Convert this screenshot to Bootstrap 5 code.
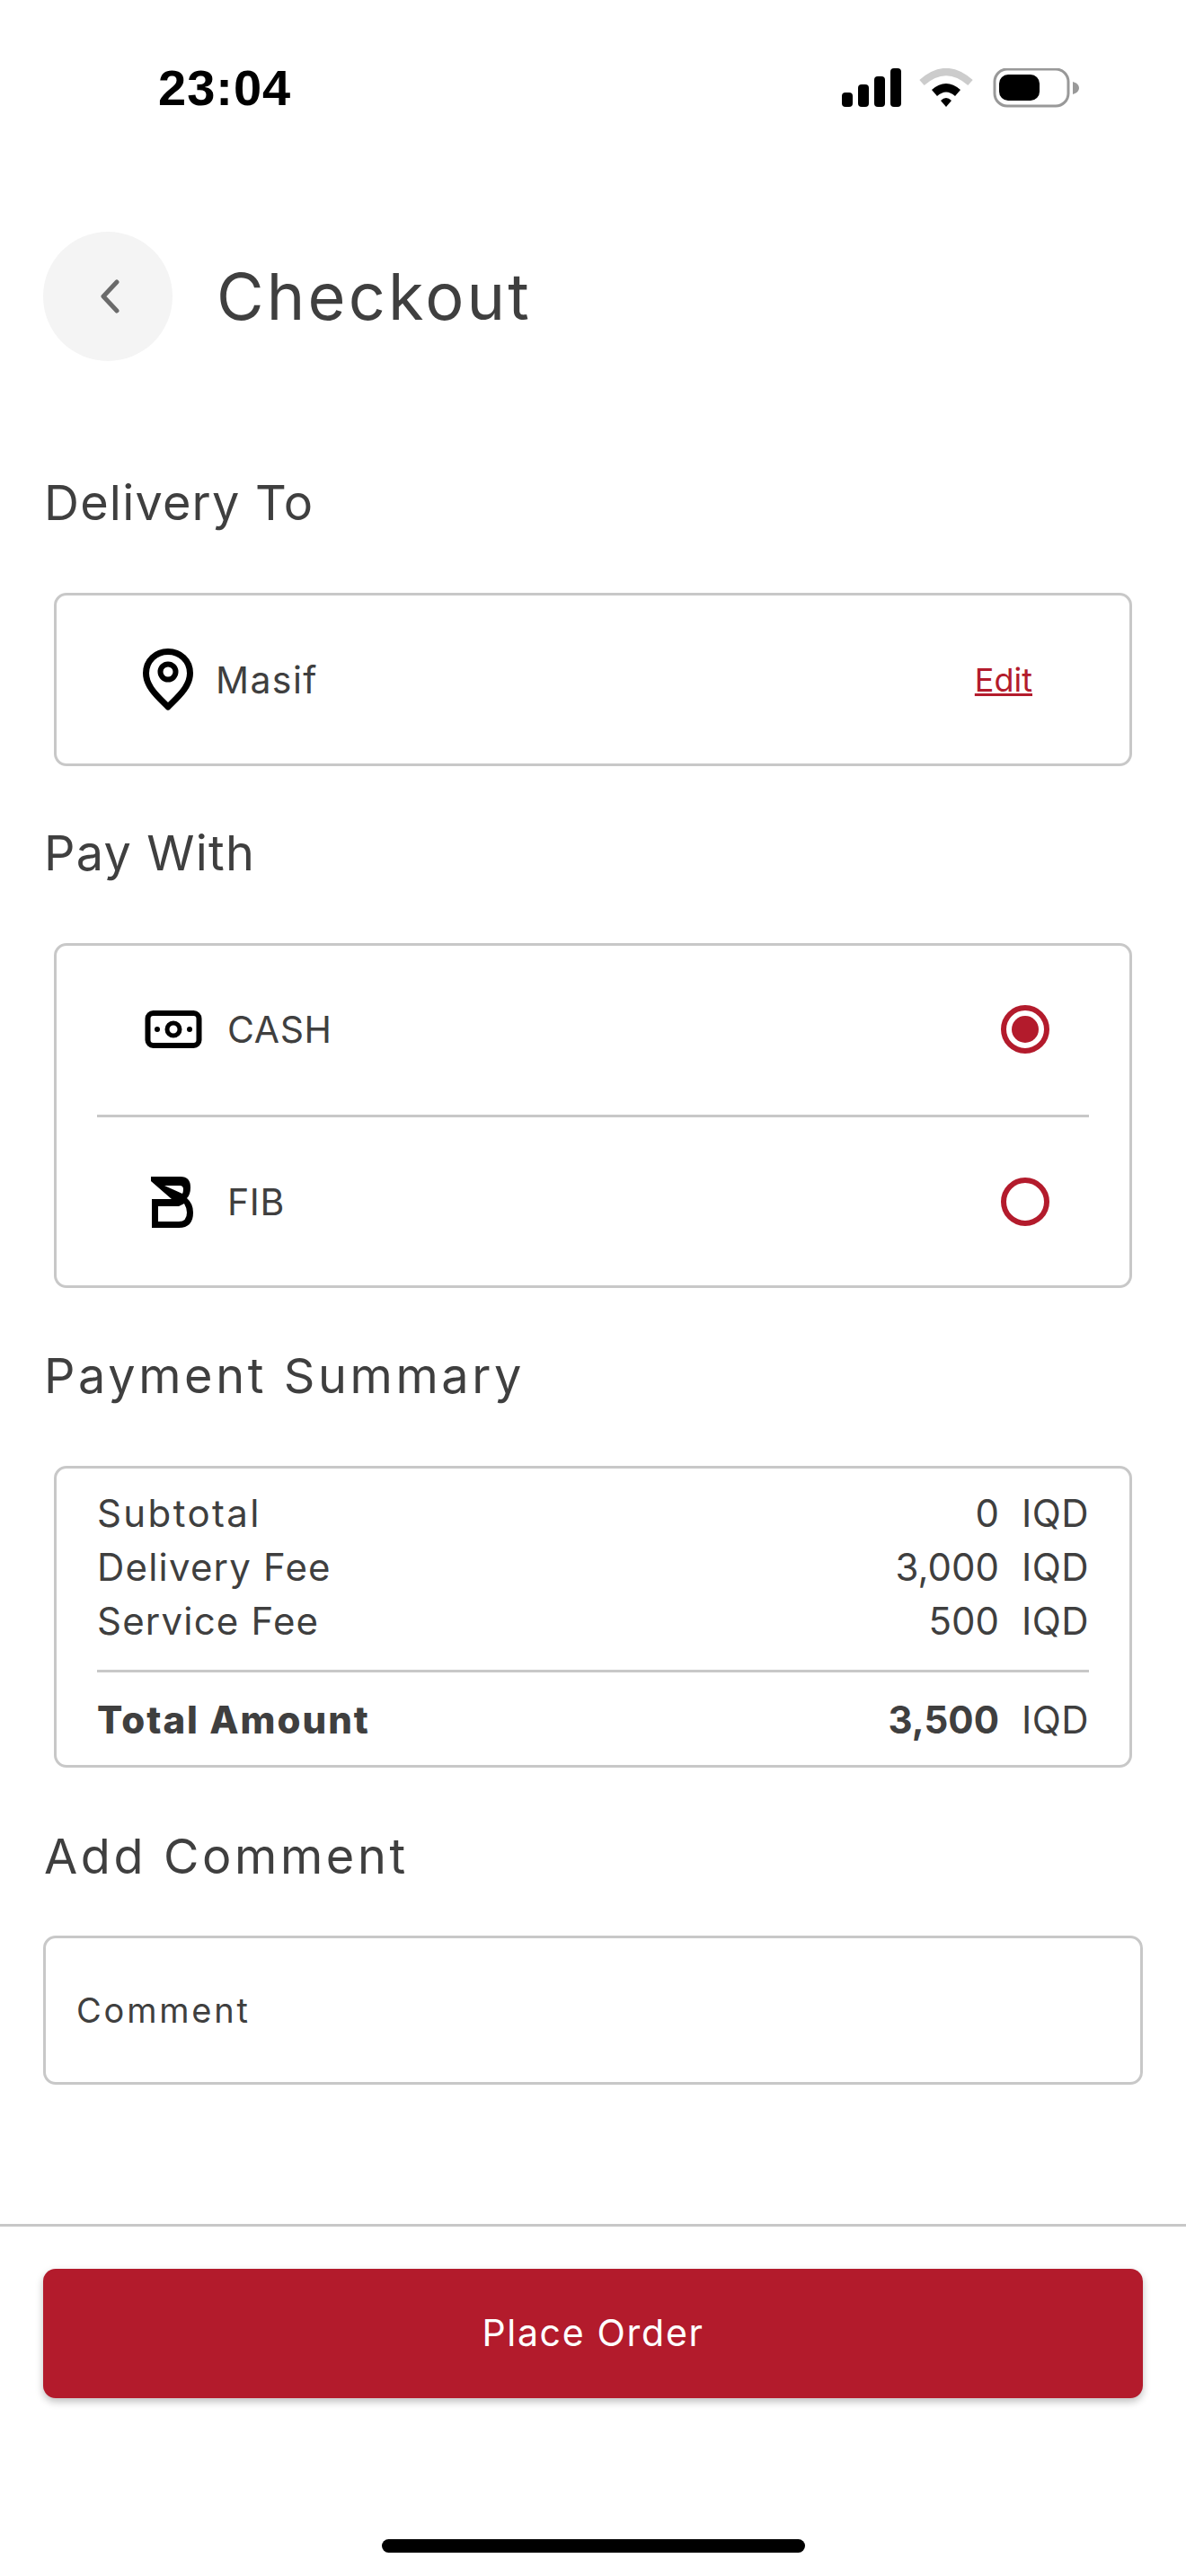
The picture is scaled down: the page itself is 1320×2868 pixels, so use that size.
<!DOCTYPE html>
<html lang="en">
<head>
  <meta charset="UTF-8">
  <title>Checkout</title>
  <meta name="viewport" content="width=device-width, initial-scale=1">
  <link href="https://cdn.jsdelivr.net/npm/bootstrap@5.3.3/dist/css/bootstrap.min.css" rel="stylesheet">
  <style>
    body {
      background: #fff;
      color: #3f3f3f;
      font-family: Inter, "Noto Sans", sans-serif;
      width: 1320px;
      height: 2868px;
      overflow: hidden;
    }
    .status-bar {
      height: 258px;
      padding: 68px 119px 0 176px;
    }
    .status-time {
      font-family: "Liberation Sans", sans-serif;
      font-size: 56px;
      line-height: 60px;
      font-weight: 700;
      letter-spacing: 1px;
      color: #000;
    }
    .back-btn {
      width: 144px;
      height: 144px;
      background: #f4f4f4;
      border: 0;
    }
    .page-title {
      font-size: 72px;
      line-height: 144px;
      font-weight: 400;
      margin: 0 0 0 49px;
      letter-spacing: 3.2px;
    }
    .page-head { margin-left: 48px; margin-bottom: 128px; }
    .sec-title {
      font-size: 54px;
      line-height: 60px;
      font-weight: 400;
      letter-spacing: 1.2px;
      margin: 0 0 0 49px;
    }
    .sec-wide { letter-spacing: 3.6px; }
    .box {
      margin: 0 60px;
      border: 3px solid #c8c8c8;
      border-radius: 14px;
    }
    .row-text { font-size: 41px; line-height: 50px; letter-spacing: .6px; }
    .addr-name { letter-spacing: 1.4px; }
    .edit-link { color: #b31b2c; font-size: 36px; line-height: 44px; margin-right: 108px; }
    .addr-box { height: 193px; padding-left: 95px; margin-top: 70px; margin-bottom: 67px; }
    .pay-box { height: 384px; margin-top: 70px; margin-bottom: 68px; }
    .pay-row { height: 186px; padding: 0 89px 0 97px; }
    .pay-icon { width: 66px; margin-right: 27px; }
    .fib-icon { margin-left: 8px; margin-right: 37px; }
    .pay-rule { height: 3px; background: #c8c8c8; margin: 2px 45px 1px; }
    .radio-ring {
      width: 54px;
      height: 54px;
      border: 6px solid #b31b2c;
      border-radius: 50%;
    }
    .radio-ring.on::after {
      content: "";
      width: 30px;
      height: 30px;
      border-radius: 50%;
      background: #b31b2c;
    }
    .sum-box { height: 336px; margin-top: 70px; margin-bottom: 69px; padding: 20px 45px 0; }
    .sum-row { font-size: 42px; line-height: 60px; }
    .sum-label { letter-spacing: 1.2px; }
    .sum-label-wide { letter-spacing: 2.4px; }
    .sum-val { text-align: right; }
    .sum-cur { width: 100px; text-align: right; letter-spacing: .4px; }
    .sum-rule { height: 3px; background: #c8c8c8; margin: 24px 0 23px; }
    .sum-total { font-weight: 800; }
    .sum-total .sum-label { letter-spacing: 2px; }
    .sum-total .sum-val { font-weight: 700; }
    .sum-total .sum-cur { font-weight: 400; }
    .comment-box {
      display: block;
      width: 1224px;
      height: 166px;
      margin: 58px 48px 0;
      border: 3px solid #c8c8c8;
      border-radius: 14px;
      padding: 0 34px;
      font-size: 38px;
      letter-spacing: 2.8px;
      color: #3f3f3f;
      outline: 0;
    }
    .comment-box::placeholder { color: #3f3f3f; opacity: 1; }
    .foot-rule { height: 3px; background: #c8c8c8; margin-top: 155px; }
    .place-btn {
      display: block;
      width: 1224px;
      height: 144px;
      margin: 47px 48px 0;
      background: #b31b2c;
      color: #fff;
      border: 0;
      border-radius: 14px;
      font-size: 41px;
      letter-spacing: 1.7px;
      box-shadow: 0 4px 8px rgba(0,0,0,.25);
    }
    .home-bar {
      width: 471px;
      height: 15px;
      margin: 157px auto 0;
      background: #000;
      border-radius: 8px;
    }
  </style>
</head>
<body>

  <div class="status-bar d-flex justify-content-between">
    <div class="status-time">23:04</div>
    <svg width="264" height="44" viewBox="0 0 264 44" class="mt-2">
      <g fill="#000">
        <rect x="0" y="27" width="12" height="16" rx="4"/>
        <rect x="18" y="18" width="12" height="25" rx="4"/>
        <rect x="36" y="9" width="12" height="34" rx="4"/>
        <rect x="54" y="0" width="12" height="43" rx="4"/>
      </g>
      <path d="M89 16 Q116 -8 143 16" fill="none" stroke="#ccc" stroke-width="8"/>
      <path d="M100 24 Q116 10 132 24 L126 31 Q116 22 106 31 Z" fill="#000"/>
      <path d="M110 36 Q116 30 122 36 L116 43 Z" fill="#000"/>
      <rect x="170" y="1" width="82" height="41" rx="14" fill="none" stroke="#999" stroke-width="3"/>
      <rect x="175" y="7" width="45" height="29" rx="10" fill="#000"/>
      <path d="M257 15 Q264 17 264 22 Q264 27 257 29 Z" fill="#999"/>
    </svg>
  </div>

  <div class="page-head d-flex align-items-center">
    <button class="back-btn rounded-circle d-flex align-items-center justify-content-center p-0">
      <svg width="24" height="38" viewBox="0 0 24 38" class="ms-1"><path d="M20 3 L5 19 L20 35" fill="none" stroke="#6b6b6b" stroke-width="5" stroke-linecap="round" stroke-linejoin="round"/></svg>
    </button>
    <h1 class="page-title">Checkout</h1>
  </div>

  <h2 class="sec-title">Delivery To</h2>
  <div class="box addr-box d-flex align-items-center">
    <svg width="58" height="70" viewBox="0 0 58 70" class="me-4">
      <path d="M29 65 C19 55 4.5 43 4.5 27.5 C4.5 13.5 15.5 3.5 29 3.5 C42.5 3.5 53.5 13.5 53.5 27.5 C53.5 43 39 55 29 65 Z" fill="none" stroke="#000" stroke-width="7" stroke-linejoin="round"/>
      <circle cx="29" cy="26" r="8.5" fill="none" stroke="#000" stroke-width="6"/>
    </svg>
    <span class="row-text addr-name">Masif</span>
    <a href="#" class="edit-link ms-auto">Edit</a>
  </div>

  <h2 class="sec-title">Pay With</h2>
  <div class="box pay-box">
    <div class="pay-row d-flex align-items-center">
      <svg width="64" height="42" viewBox="0 0 64 42" class="pay-icon">
        <rect x="3.5" y="3" width="57" height="36" rx="6" fill="none" stroke="#000" stroke-width="6"/>
        <circle cx="32" cy="21" r="7" fill="none" stroke="#000" stroke-width="5"/>
        <circle cx="14" cy="21" r="3" fill="#000"/>
        <circle cx="50" cy="21" r="3" fill="#000"/>
      </svg>
      <span class="row-text">CASH</span>
      <span class="radio-ring on ms-auto d-flex align-items-center justify-content-center"></span>
    </div>
    <div class="pay-rule"></div>
    <div class="pay-row d-flex align-items-center">
      <svg width="48" height="57" viewBox="13 8 48 57" class="fib-icon">
        <path d="M13 8 H46 Q57 8 57 20 Q57 28 53 32 Q60 38 60 48 Q60 65 44 65 H14 V33 H36 L13 13 Z M28 18 H45 Q49 18 49 22 Q49 25 48 27 Z M21 41 H44 L50 38 Q53 43 53 48 Q53 58 44 58 H21 Z" fill="#000" fill-rule="evenodd"/>
      </svg>
      <span class="row-text">FIB</span>
      <span class="radio-ring ms-auto"></span>
    </div>
  </div>

  <h2 class="sec-title sec-wide">Payment Summary</h2>
  <div class="box sum-box">
    <div class="sum-row d-flex"><span class="sum-label sum-label-wide">Subtotal</span><span class="sum-val ms-auto">0</span><span class="sum-cur">IQD</span></div>
    <div class="sum-row d-flex"><span class="sum-label">Delivery Fee</span><span class="sum-val ms-auto">3,000</span><span class="sum-cur">IQD</span></div>
    <div class="sum-row d-flex"><span class="sum-label">Service Fee</span><span class="sum-val ms-auto">500</span><span class="sum-cur">IQD</span></div>
    <div class="sum-rule"></div>
    <div class="sum-row sum-total d-flex"><span class="sum-label">Total Amount</span><span class="sum-val ms-auto">3,500</span><span class="sum-cur">IQD</span></div>
  </div>

  <h2 class="sec-title sec-wide">Add Comment</h2>
  <input class="comment-box" type="text" placeholder="Comment">

  <div class="foot-rule"></div>
  <button class="place-btn">Place Order</button>
  <div class="home-bar"></div>

  <script src="https://cdn.jsdelivr.net/npm/bootstrap@5.3.3/dist/js/bootstrap.bundle.min.js" defer></script>
</body>
</html>
